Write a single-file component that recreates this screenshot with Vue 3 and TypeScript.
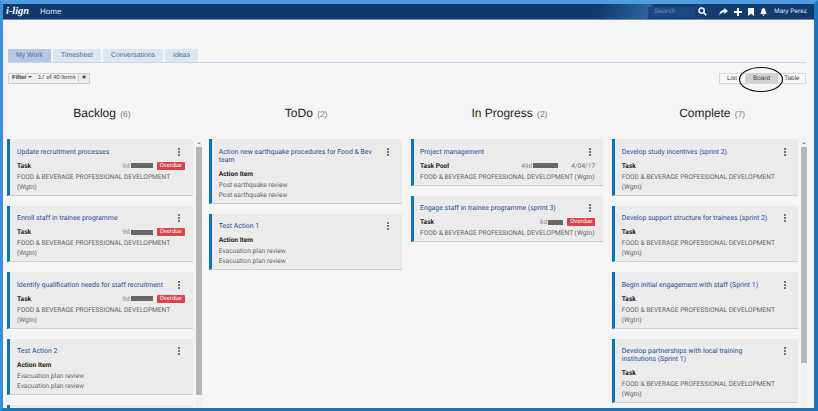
<script setup lang="ts">
interface Card { title: string; kind: string; age?: string; bar?: number; overdue?: boolean; date?: string; lines: string[] }
interface Col { name: string; count: number; scroll?: number; stub?: boolean; cards: Card[] }
const food = ['FOOD & BEVERAGE PROFESSIONAL DEVELOPMENT (Wgtn)']
const t = (title: string, extra: Partial<Card> = {}): Card => ({ title, kind: 'Task', lines: food, ...extra })
const od = { age: '9d', bar: 22, overdue: true }
const columns: Col[] = [
  { name: 'Backlog', count: 6, scroll: 248, stub: true, cards: [
    t('Update recruitment processes', od),
    t('Enroll staff in trainee programme', od),
    t('Identify qualification needs for staff recruitment', od),
    { title: 'Test Action 2', kind: 'Action Item', lines: ['Evacuation plan review', 'Evacuation plan review'] },
  ] },
  { name: 'ToDo', count: 2, cards: [
    { title: 'Action new earthquake procedures for Food & Bev team', kind: 'Action Item', lines: ['Post earthquake review', 'Post earthquake review'] },
    { title: 'Test Action 1', kind: 'Action Item', lines: ['Evacuation plan review', 'Evacuation plan review'] },
  ] },
  { name: 'In Progress', count: 2, cards: [
    t('Project management', { kind: 'Task Pool', age: '49d', bar: 25, date: '4/04/17' }),
    t('Engage staff in trainee programme (sprint 3)', { age: '6d', bar: 15, overdue: true }),
  ] },
  { name: 'Complete', count: 7, scroll: 216, cards: [
    t('Develop study incentives (sprint 2)'),
    t('Develop support structure for trainees (sprint 2)'),
    t('Begin initial engagement with staff (Sprint 1)'),
    t('Develop partnerships with local training institutions (Sprint 1)'),
  ] },
]
const tabs = ['My Work', 'Timesheet', 'Conversations', 'Ideas']
</script>

<template>
  <div class="frame">
    <header class="top">
      <span class="logo">i-lign</span>
      <span class="home">Home</span>
      <span class="sweep"></span>
      <span class="search">Search</span>
      <svg class="ic mag" width="9" height="9" viewBox="0 0 10 10"><circle cx="4" cy="4" r="2.9" fill="none" stroke="#fff" stroke-width="1.6"/><path d="M6.2 6.2 9.2 9.2" stroke="#fff" stroke-width="1.8"/></svg>
      <svg class="ic share" width="9" height="8" viewBox="0 0 10 9"><path d="M6 0 10 3.4 6 6.8V4.8C3.4 4.8 1.6 5.6.4 8.4.4 4.6 2.6 2 6 2Z" fill="#fff"/></svg>
      <svg class="ic plus" width="8" height="8" viewBox="0 0 8 8"><path d="M3 0h2v3h3v2H5v3H3V5H0V3h3Z" fill="#fff"/></svg>
      <svg class="ic mark" width="6" height="8" viewBox="0 0 6 8"><path d="M0 0h6v8L3 5.8 0 8Z" fill="#fff"/></svg>
      <svg class="ic bell" width="7" height="8" viewBox="0 0 7 8"><path d="M3.5 0C5 .3 5.6 1.5 5.6 3c0 1.4.4 2.3 1.4 3H0c1-.7 1.4-1.6 1.4-3C1.4 1.5 2 .3 3.5 0ZM2.5 6.6h2C4.5 7.4 4 8 3.5 8s-1-.6-1-1.4Z" fill="#fff"/></svg>
      <span class="user">Mary Perez</span>
    </header>

    <main class="page">
      <nav class="tabs">
        <span v-for="(tab, i) in tabs" :key="tab" class="tab" :class="{ active: i === 0 }">{{ tab }}</span>
      </nav>

      <div class="tools">
        <div class="filter">
          <span class="f-btn">Filter <i class="caret"></i></span>
          <span class="f-count">17 of 40 items</span>
          <span class="f-x">✖</span>
        </div>
        <div class="views">
          <span class="view">List</span>
          <span class="view on">Board</span>
          <span class="view">Table</span>
          <svg class="oval" width="46" height="27" viewBox="0 0 46 27"><ellipse cx="23" cy="13.5" rx="21.5" ry="12" fill="none" stroke="#111" stroke-width="1.2"/></svg>
        </div>
      </div>

      <section class="board">
        <div v-for="col in columns" :key="col.name" class="col">
          <h2 class="head">{{ col.name }} <small>({{ col.count }})</small></h2>
          <div class="body">
            <div class="list">
              <article v-for="card in col.cards" :key="card.title" class="card">
                <div class="title-row">
                  <a class="title">{{ card.title }}</a>
                  <span class="kebab"><i></i><i></i><i></i></span>
                </div>
                <div class="meta">
                  <b>{{ card.kind }}</b>
                  <span class="right">
                    <span v-if="card.age" class="age">{{ card.age }}</span>
                    <span v-if="card.bar" class="bar" :style="{ width: card.bar + 'px' }"></span>
                    <span v-if="card.overdue" class="badge">Overdue</span>
                    <span v-if="card.date" class="date">{{ card.date }}</span>
                  </span>
                </div>
                <p v-for="(l, i) in card.lines" :key="i" class="line">{{ l }}</p>
              </article>
              <div v-if="col.stub" class="card stub"></div>
            </div>
            <div v-if="col.scroll" class="scroll">
              <i class="arrow"></i>
              <span class="thumb" :style="{ height: col.scroll + 'px' }"></span>
            </div>
          </div>
        </div>
      </section>
    </main>
  </div>
</template>

<style>
html, body { margin: 0; background: #3d8fd6; }
</style>

<style scoped>
.frame {
  box-sizing: border-box;
  width: 818px;
  height: 411px;
  border-style: solid;
  border-width: 4px 4px 3px 3px;
  border-color: #4f9fe0 #1b75bc #1b75bc #3d8fd6;
  display: flex;
  flex-direction: column;
  overflow: hidden;
  font-family: Roboto, "Liberation Sans", sans-serif;
  text-rendering: geometricPrecision;
}
.top {
  height: 15px;
  flex: none;
  background: linear-gradient(108deg, #10396d 0, #10396d 73%, #2c649f 79.4%, #173f72 79.8%, #10396d 100%);
  border-bottom: 1px solid #6f8db3;
  display: flex;
  align-items: center;
  color: #fff;
  padding: 0 7px 0 3px;
}
.logo { font: italic bold 10.4px "Liberation Serif", serif; width: 34px; }
.home { font: 8px "Liberation Sans", sans-serif; color: #dfe8f3; }
.sweep { flex: 1; }
.search {
  width: 41px; height: 10px; padding-left: 6px; background: #1b4a82;
  font: 6.6px/10px "Liberation Sans", sans-serif; color: #6a92c2;
}
.ic { flex: none; }
.mag { margin-left: 3px; }
.share { margin-left: 12px; }
.plus { margin-left: 6px; }
.mark { margin-left: 6px; }
.bell { margin-left: 6px; }
.user { margin-left: 7px; font: 6.4px "Liberation Sans", sans-serif; color: #e4ecf5; }

.page { flex: 1; min-height: 0; background: #f5f5f5; padding: 29px 8px 0 4px; display: flex; flex-direction: column; }
.tabs { display: flex; gap: 2px; height: 13px; margin-left: 1px; border-bottom: 1px solid #ccd5ea; flex: none; }
.tab {
  height: 13px; background: #dce5f0; color: #4a6a96; padding: 0 8px;
  font: 6.9px/13px "Liberation Sans", sans-serif; border-radius: 1px 1px 0 0;
}
.tab.active { background: #b6c9e4; }
.tools { display: flex; justify-content: space-between; margin-top: 10px; height: 11px; flex: none; margin-left: 1px; }
.filter { display: flex; border: 1px solid #cfcfcf; background: #ededed; font: 6px/9px "Liberation Sans", sans-serif; color: #444; }
.f-btn { padding: 0 0 0 3px; width: 24px; font-weight: bold; }
.caret { display: inline-block; border: 2px solid transparent; border-top-color: #555; border-bottom: 0; vertical-align: 1px; }
.f-count { padding: 0 2px; background: #f0f0f0; }
.f-x { border-left: 1px solid #cfcfcf; padding: 0 3px; font-size: 5.5px; color: #444; }
.views { display: flex; position: relative; border: 1px solid #d8d8d8; background: #f9f9f9; font: 6.4px/9px "Liberation Sans", sans-serif; color: #444; width: 85px; }
.view { text-align: center; }
.view:nth-child(1) { width: 24px; }
.view:nth-child(2) { width: 33px; margin-left: 1px; background: #d2d2d2; }
.view:nth-child(3) { width: 26px; margin-left: 1px; }
.oval { position: absolute; left: 18px; top: -8px; }

.board { flex: 1; min-height: 0; display: grid; grid-template-columns: repeat(4, 1fr); gap: 7px; margin: 19px -1px 0 0; }
.col { min-width: 0; display: flex; flex-direction: column; min-height: 0; }
.head { margin: 0; height: 36px; flex: none; font: normal 12px/20px "Liberation Sans", sans-serif; text-align: center; color: #222; }
.col:nth-child(1) .head { padding-right: 5px; }
.col:nth-child(3) .head { padding-left: 3px; }
.col:nth-child(4) .head { padding-left: 5px; }
.head small { font-size: 8.4px; color: #777; margin-left: 1px; }
.body { flex: 1; min-height: 0; display: flex; gap: 3px; overflow: hidden; }
.list { flex: 1; min-width: 0; display: flex; flex-direction: column; gap: 10px; }
.col:nth-child(2) .list, .col:nth-child(3) .list { margin-right: 2px; }
.col:nth-child(3) .card, .col:nth-child(4) .card { padding-left: 6.5px; }
.card {
  flex: none;
  box-sizing: border-box;
  background: #ebebeb;
  border-left: 3px solid #0a74b8;
  border-bottom: 1px solid #d0d0d0;
  padding: 8.5px 8px 3px 7px;
}
.stub { height: 12px; }
.title-row { display: flex; justify-content: space-between; }
.title { flex: 1; padding-right: 11px; font-size: 6.9px; line-height: 8px; color: #1d4f9c; }
.kebab { flex: none; width: 5px; margin: 0 3px 0 0; display: flex; flex-direction: column; align-items: center; gap: 1px; }
.kebab i { width: 2px; height: 2px; background: #777; }
.meta { display: flex; justify-content: space-between; align-items: center; margin: 5px 0 1px; height: 10px; font-size: 6.6px; line-height: 10px; color: #222; }
.right { display: flex; align-items: center; color: #888; }
.age { margin-right: 1px; }
.bar { height: 5px; background: #666; }
.badge { margin-left: 4px; background: #d9434a; color: #fff; height: 8px; width: 28px; text-align: center; font-size: 6px; line-height: 8px; border-radius: 1px; }
.date { margin-left: 13px; color: #777; }
.line { margin: 0; font-size: 6.6px; line-height: 10px; color: #666; }
.scroll { flex: none; width: 6px; background: #f1f1f1; position: relative; padding-top: 8px; box-sizing: border-box; }
.arrow { position: absolute; top: 3px; left: 1px; border: 2px solid transparent; border-bottom-color: #999; border-top: 0; }
.thumb { display: block; background: #b6b6b6; }
</style>
